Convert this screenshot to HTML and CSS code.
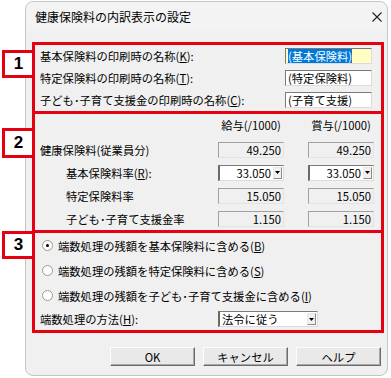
FILE: index.html
```html
<!DOCTYPE html>
<html lang="ja">
  <head>
    <meta charset="UTF-8" />
    <title>健康保険料の内訳表示の設定</title>
    <link rel="stylesheet" href="styles.css">
  </head>
  <body>
    <div class="window">
      <div class="titlebar">
        <span class="title">健康保険料の内訳表示の設定</span>
        <svg class="close" width="10" height="10" viewBox="0 0 10 10">
          <path d="M0.5 0.5L9.5 9.5M9.5 0.5L0.5 9.5" stroke="#222" stroke-width="1.1" fill="none" />
        </svg>
      </div>
      <div class="content">
        <section class="callout names">
          <div class="badge">1</div>
          <div class="name-row">
            <span>基本保険料の印刷時の名称(<u>K</u>):</span>
            <div class="field edit active"><span class="sel">(基本保険料)</span></div>
          </div>
          <div class="name-row">
            <span>特定保険料の印刷時の名称(<u>T</u>):</span>
            <div class="field edit">(特定保険料)</div>
          </div>
          <div class="name-row">
            <span>子ども･子育て支援金の印刷時の名称(<u>C</u>):</span>
            <div class="field edit">(子育て支援)</div>
          </div>
        </section>

        <section class="callout rates">
          <div class="badge">2</div>
          <div class="rate-row head">
            <span></span>
            <span class="col-head">給与(/1000)</span>
            <span class="col-head">賞与(/1000)</span>
          </div>
          <div class="rate-row">
            <span>健康保険料(従業員分)</span>
            <div class="field ro">49.250</div>
            <div class="field ro">49.250</div>
          </div>
          <div class="rate-row sub">
            <span>基本保険料率(<u>R</u>):</span>
            <div class="field combo">
              <span class="val">33.050</span>
              <span class="drop"><svg width="5" height="3" viewBox="0 0 5 3"><path d="M0 0H5L2.5 3Z" fill="#000" /></svg></span>
            </div>
            <div class="field combo">
              <span class="val">33.050</span>
              <span class="drop"><svg width="5" height="3" viewBox="0 0 5 3"><path d="M0 0H5L2.5 3Z" fill="#000" /></svg></span>
            </div>
          </div>
          <div class="rate-row sub">
            <span>特定保険料率</span>
            <div class="field ro">15.050</div>
            <div class="field ro">15.050</div>
          </div>
          <div class="rate-row sub">
            <span>子ども･子育て支援金率</span>
            <div class="field ro">1.150</div>
            <div class="field ro">1.150</div>
          </div>
        </section>

        <section class="callout rounding">
          <div class="badge">3</div>
          <div class="radio-row"><span class="radio checked"></span><span>端数処理の残額を基本保険料に含める(<u>B</u>)</span></div>
          <div class="radio-row"><span class="radio"></span><span>端数処理の残額を特定保険料に含める(<u>S</u>)</span></div>
          <div class="radio-row"><span class="radio"></span><span>端数処理の残額を子ども･子育て支援金に含める(<u>I</u>)</span></div>
          <div class="method-row">
            <span>端数処理の方法(<u>H</u>):</span>
            <div class="field combo wide">
              <span class="val">法令に従う</span>
              <span class="drop"><svg width="5" height="3" viewBox="0 0 5 3"><path d="M0 0H5L2.5 3Z" fill="#000" /></svg></span>
            </div>
          </div>
        </section>

        <div class="buttons">
          <button>OK</button>
          <button>キャンセル</button>
          <button>ヘルプ</button>
        </div>
      </div>
    </div>
  </body>
</html>
```

FILE: styles.css
```css
:root {
  --red: #e50012;
  --face: #f0f0f0;
}

* {
  margin: 0;
  padding: 0;
  box-sizing: border-box;
}

body {
  background: #fff;
  font-family: "Noto Sans CJK JP", "Noto Sans", sans-serif;
  font-size: 11.3px;
  color: #000;
}

.window {
  margin: 1px 0 0 25px;
  width: 363px;
  height: 375px;
  background: var(--face);
  border: 1px solid #c4c4c4;
  border-radius: 8px;
  display: flex;
  flex-direction: column;
}

.titlebar {
  height: 29px;
  display: flex;
  align-items: center;
  justify-content: space-between;
  padding: 0 5px 0 9px;
  background: #f3f3f3;
  border-radius: 8px 8px 0 0;
}

.title {
  font-size: 12px;
  line-height: 16px;
}

.content {
  padding: 11px 0 0 6px;
}

.callout {
  position: relative;
  width: 352px;
  border: 3px solid var(--red);
}

.rates,
.rounding {
  border-top: 0;
}

.badge {
  position: absolute;
  left: -33px;
  width: 33px;
  height: 28px;
  background: #fff;
  border: 3px solid var(--red);
  font-family: "Liberation Sans", Arial, sans-serif;
  font-weight: bold;
  font-size: 17px;
  line-height: 22px;
  text-align: center;
  z-index: 1;
}

.names .badge {
  top: 5px;
}

.rates .badge {
  top: 14px;
  height: 30px;
  line-height: 24px;
}

.rounding .badge {
  top: -2px;
}

u {
  text-decoration: underline;
  text-underline-offset: 1px;
}

/* box 1 */
.name-row {
  height: 22px;
  display: flex;
  align-items: center;
  justify-content: space-between;
  padding: 0 9px 0 5px;
  line-height: 14px;
}

.field {
  height: 16px;
  line-height: 14px;
  white-space: nowrap;
  overflow: hidden;
}

.edit {
  width: 87px;
  background: #fff;
  border: 1px solid;
  border-color: #7a7a7a #dcdcdc #dcdcdc #7a7a7a;
  padding-left: 2px;
}

.edit.active {
  background: #ffffc4;
}

.sel {
  background: #0078d7;
  color: #fff;
}

/* box 2 */
.rate-row {
  height: 23px;
  display: grid;
  grid-template-columns: 1fr 66px 66px;
  column-gap: 24px;
  align-items: center;
  padding: 0 7px 0 5px;
  line-height: 14px;
}

.rate-row.head {
  height: 22px;
  margin-bottom: 2px;
}

.rate-row.sub > span:first-child {
  padding-left: 26px;
}

.col-head {
  text-align: center;
}

.ro {
  background: var(--face);
  border: 1px solid;
  border-color: #a0a0a0 #e3e3e3 #e3e3e3 #a0a0a0;
  text-align: right;
  padding-right: 2px;
}

.combo {
  display: flex;
  align-items: center;
  background: #fff;
  border: 1px solid;
  border-left-width: 2px;
  border-color: #7a7a7a #dcdcdc #dcdcdc #6a6a6a;
  padding-right: 1px;
}

.combo .val {
  flex: 1;
  text-align: right;
  padding-right: 2px;
}

.drop {
  width: 9px;
  height: 12px;
  display: flex;
  align-items: center;
  justify-content: center;
  background: var(--face);
  border: 1px solid;
  border-color: #e8e8e8 #8a8a8a #8a8a8a #e8e8e8;
}

/* box 3 */
.radio-row {
  height: 25px;
  display: flex;
  align-items: center;
  gap: 5px;
  padding-left: 7px;
  line-height: 14px;
}

.radio {
  width: 11px;
  height: 11px;
  border-radius: 50%;
  background: #fff;
  border: 1px solid #9a9a9a;
  position: relative;
}

.radio.checked::after {
  content: "";
  position: absolute;
  left: 3px;
  top: 3px;
  width: 3px;
  height: 3px;
  border-radius: 50%;
  background: #000;
}

.method-row {
  height: 22px;
  display: flex;
  align-items: center;
  padding-left: 5px;
  line-height: 14px;
}

.method-row > span {
  width: 178px;
}

.combo.wide {
  width: 100px;
}

.combo.wide .val {
  text-align: left;
  padding-left: 2px;
}

/* buttons */
.buttons {
  display: flex;
  justify-content: flex-end;
  gap: 8px;
  margin-top: 14px;
  padding-right: 6px;
}

.buttons button {
  width: 85px;
  height: 19px;
  font-family: "Noto Sans CJK JP", "Noto Sans", sans-serif;
  font-size: 11.3px;
  line-height: 14px;
  color: #000;
  background: #e9e9e9;
  border: 1px solid;
  border-color: #fdfdfd #6b6b6b #6b6b6b #fdfdfd;
  box-shadow: inset -1px -1px 0 #a8a8a8;
}
```
